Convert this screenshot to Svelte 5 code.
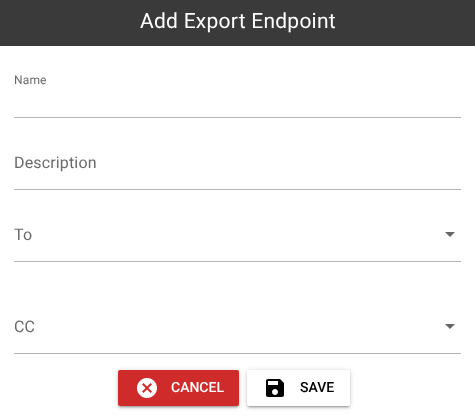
<script>
    const fields = [
        { label: 'Description', height: 72 },
        { label: 'To', height: 72, select: true },
        { label: 'CC', height: 92, select: true }
    ];
</script>

<div class="dialog">
    <header class="title">Add Export Endpoint</header>

    <form class="form">
        <div class="field name">
            <span class="small-label">Name</span>
        </div>
        {#each fields as field}
            <div class="field" style="height: {field.height}px">
                <span class="label">{field.label}</span>
                {#if field.select}
                    <svg class="arrow" viewBox="0 0 10 5" width="10" height="5"><path d="M0 0h10L5 5z" /></svg>
                {/if}
            </div>
        {/each}

        <div class="actions">
            <button type="button" class="btn cancel">
                <svg viewBox="0 0 24 24" width="24" height="24">
                    <path fill="#fff" d="M12 2C6.47 2 2 6.47 2 12s4.47 10 10 10 10-4.47 10-10S17.53 2 12 2zm5 13.59L15.59 17 12 13.41 8.41 17 7 15.59 10.59 12 7 8.41 8.41 7 12 10.59 15.59 7 17 8.41 13.41 12 17 15.59z" />
                </svg>
                <span>CANCEL</span>
            </button>
            <button type="button" class="btn save">
                <svg viewBox="0 0 24 24" width="24" height="24">
                    <path fill="#000" d="M17 3H5c-1.11 0-2 .9-2 2v14c0 1.1.89 2 2 2h14c1.1 0 2-.9 2-2V7l-4-4zm-5 16c-1.66 0-3-1.34-3-3s1.34-3 3-3 3 1.34 3 3-1.34 3-3 3zm3-10H5V5h10v4z" />
                </svg>
                <span>SAVE</span>
            </button>
        </div>
    </form>
</div>

<style>
    :global(body) {
        margin: 0;
        background: #fff;
    }
    .dialog {
        width: 475px;
        height: 419px;
        overflow: hidden;
        font-family: Roboto, sans-serif;
        text-rendering: geometricPrecision;
        will-change: transform;
    }
    .title {
        height: 46px;
        line-height: 44px;
        background: #3a3a3a;
        color: #fff;
        font-size: 21px;
        letter-spacing: 0.25px;
        text-align: center;
        padding-left: 1px;
        box-sizing: border-box;
    }
    .form {
        padding: 0 14px;
    }
    .field {
        position: relative;
        display: flex;
        align-items: flex-end;
        justify-content: space-between;
        box-sizing: border-box;
        border-bottom: 1px solid #b5b5b5;
        padding-bottom: 17px;
        color: #6a6a6a;
    }
    .field.name {
        height: 72px;
        align-items: flex-start;
        padding: 27px 0 0;
    }
    .small-label {
        font-size: 12px;
        line-height: 14px;
        letter-spacing: 0.15px;
    }
    .label {
        font-size: 16px;
        line-height: 19px;
        letter-spacing: 0.15px;
    }
    .arrow {
        position: absolute;
        right: 6px;
        bottom: 24px;
    }
    .arrow path {
        fill: #666;
    }
    .actions {
        display: flex;
        justify-content: center;
        gap: 8px;
        margin: 16px 7px 0 0;
    }
    .btn {
        display: flex;
        align-items: center;
        height: 36px;
        padding: 0;
        border: none;
        border-radius: 2px;
        font-family: inherit;
        font-size: 14px;
        font-weight: 500;
        letter-spacing: 0;
        text-rendering: geometricPrecision;
        box-shadow: 0 1px 5px rgba(0, 0, 0, 0.2), 0 2px 2px rgba(0, 0, 0, 0.14), 0 3px 1px -2px rgba(0, 0, 0, 0.12);
    }
    .cancel {
        width: 121px;
        background: #d02b2b;
        color: #fff;
        padding-left: 17px;
        gap: 12px;
    }
    .save {
        width: 103px;
        background: #fff;
        color: #000;
        padding-left: 16px;
        gap: 13px;
    }
</style>
